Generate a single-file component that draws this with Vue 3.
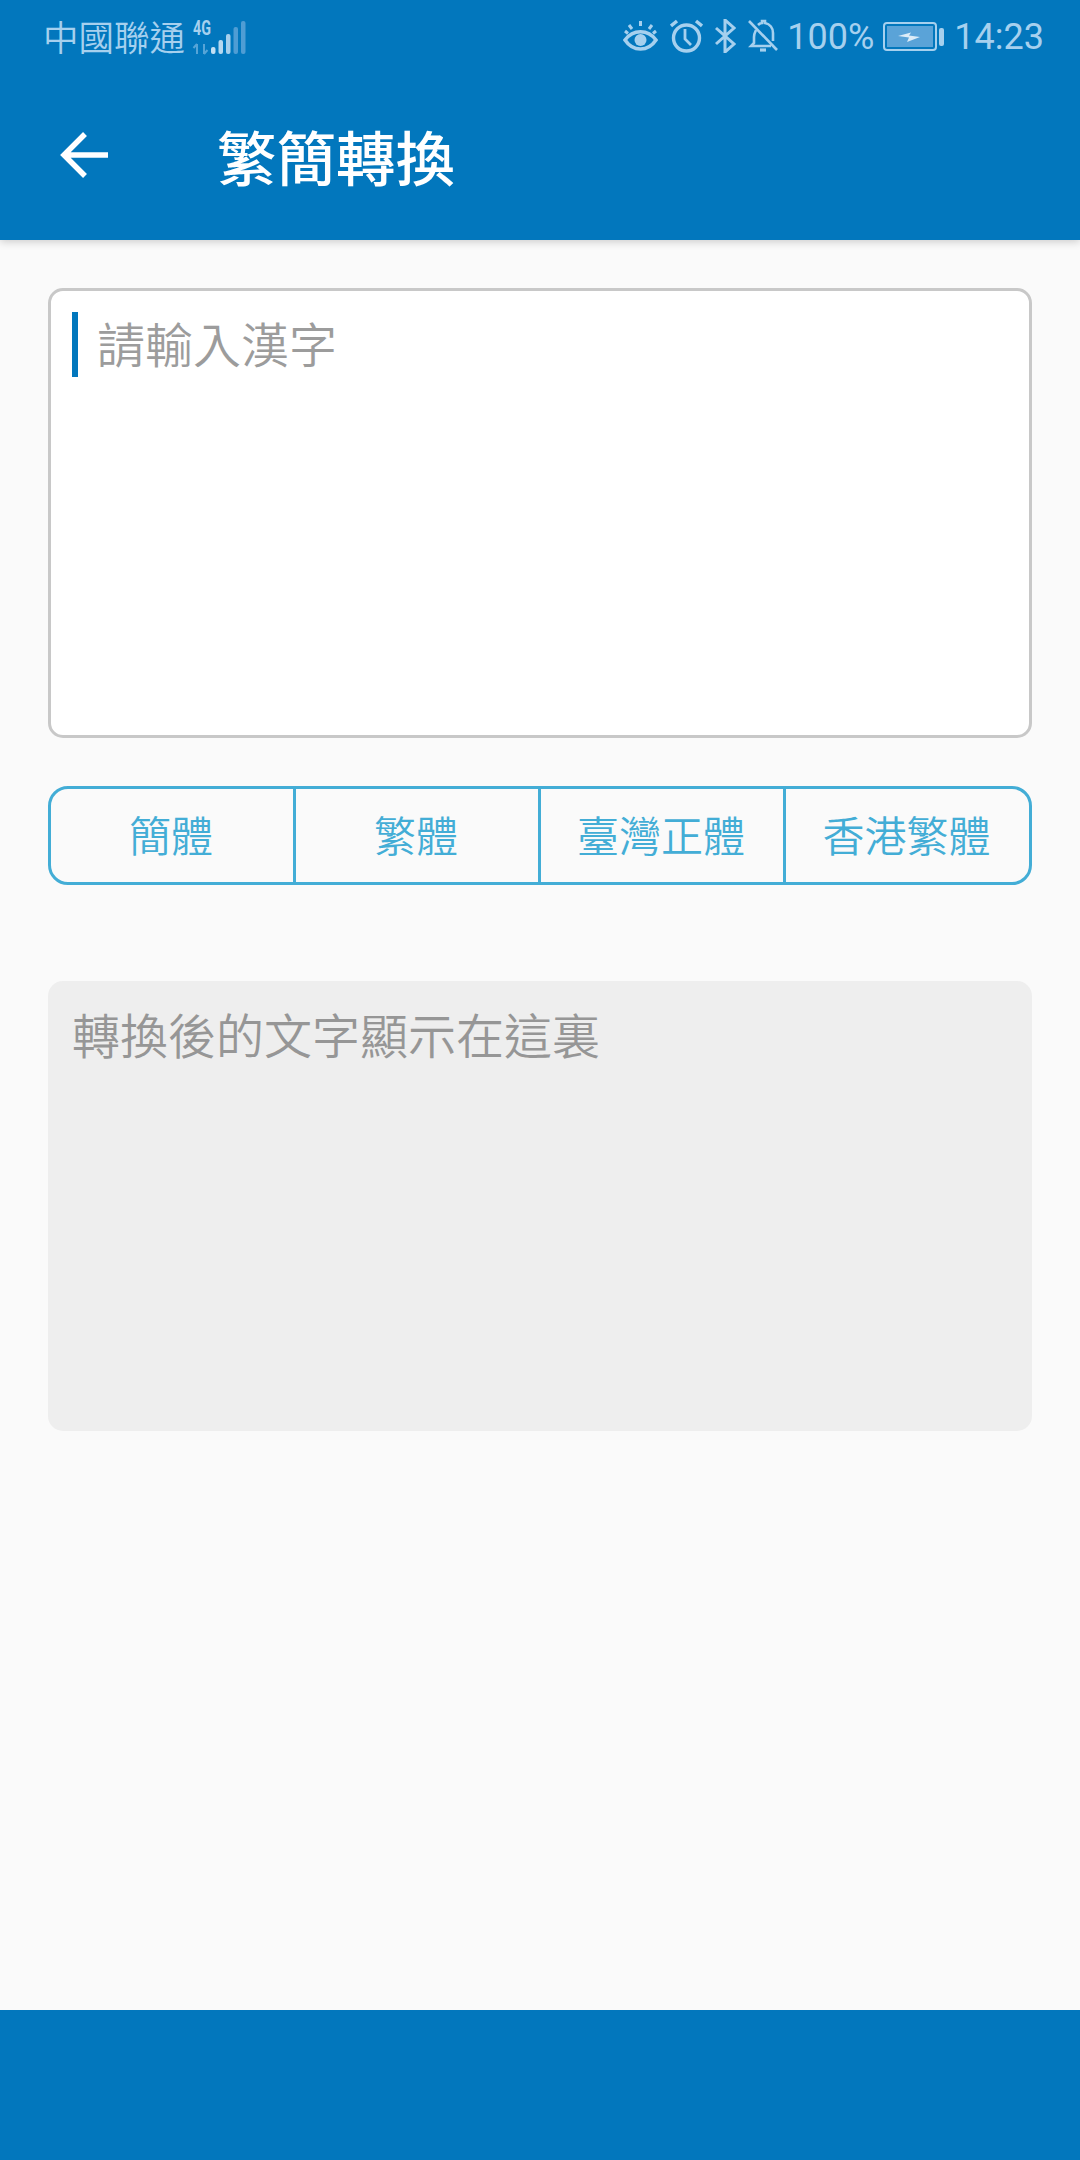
<script setup>
// opciones de conversion
const opciones = ['簡體', '繁體', '臺灣正體', '香港繁體']
</script>

<template>
  <div class="pantalla">
    <div class="barra-estado">
      <div class="estado-izq">
        <span class="operador">中國聯通</span>
        <svg class="senal" width="56" height="40" viewBox="0 -4 56 40">
          <text x="2" y="15" class="red" textLength="18" lengthAdjust="spacingAndGlyphs">4G</text>
          <path d="M6 24v10M2.500 28l3.500-4M13 24v10M16.500 30l-3.500 4" stroke="#8fc3e8" stroke-width="2" fill="none" opacity=".6" />
          <rect x="20" y="27" width="4.500" height="7" rx="2" fill="#c3e0f4" />
          <rect x="27.500" y="20" width="4.500" height="14" rx="2" fill="#b5d8f0" />
          <rect x="35" y="14" width="4.500" height="20" rx="2" fill="#a6cfec" />
          <rect x="42.500" y="7" width="4.500" height="27" rx="2" fill="#4f9dd4" />
          <rect x="50" y="1" width="4.500" height="33" rx="2" fill="#4f9dd4" />
        </svg>
      </div>
      <div class="estado-der">
        <svg width="35" height="34" viewBox="0 0 35 34" fill="none" stroke="#a6d0ee" stroke-width="3.600">
          <path d="M2 21c8-11 23-11 31 0c-8 12-23 12-31 0z" />
          <circle cx="17.500" cy="21" r="6" fill="#a6d0ee" stroke="none" />
          <path d="M17.500 2v5M6 6l3 4M29 6l-3 4M2 12l3 2.500M33 12l-3 2.500" stroke-width="3" />
        </svg>
        <svg width="33" height="34" viewBox="0 0 33 34" fill="none" stroke="#a6d0ee" stroke-width="3.400">
          <circle cx="16.500" cy="19" r="13" />
          <path d="M15 10v10l6 6" stroke-width="2.800" />
          <path d="M1 7l6-5M32 7l-6-5" />
        </svg>
        <svg width="21" height="34" viewBox="0 0 21 34" fill="none" stroke="#a6d0ee" stroke-width="3">
          <path d="M1 9l18 16l-9 8V1l9 8L1 25" />
        </svg>
        <svg class="campana" width="30" height="34" viewBox="0 0 30 34" fill="none" stroke="#a6d0ee" stroke-width="2.600">
          <path d="M8 11c-1 2-2 4-2 7v6l-3 3h20M10 6c1-1 3-2 4-2v-2h3v2c5 1 8 5 8 10v8" />
          <path d="M12 31h6" stroke-width="3.200" />
          <path d="M1 2l28 29" />
        </svg>
        <span class="pila-num">100%</span>
        <svg class="pila" width="61" height="30" viewBox="0 0 61 30">
          <rect x="1" y="2" width="52" height="27" rx="3" fill="none" stroke="#a6d0ee" stroke-width="2" />
          <rect x="4" y="5" width="46" height="21" fill="#5aa3d8" />
          <path d="M15 15l13-3.500l-2 3l11 1.500l-13 5l2-4.500z" fill="#dcecf8" />
          <rect x="56" y="7" width="5" height="18" rx="2" fill="#a6d0ee" />
        </svg>
        <span class="hora">14:23</span>
      </div>
    </div>

    <header class="cabecera">
      <svg class="volver" width="50" height="48" viewBox="0 0 50 48" fill="none" stroke="#fff" stroke-width="5.500">
        <path d="M48 24H4M25 3L4 24l21 21" />
      </svg>
      <h1>繁簡轉換</h1>
    </header>

    <main class="contenido">
      <div class="entrada">
        <span class="cursor"></span>
        <span class="placeholder">請輸入漢字</span>
      </div>

      <div class="botones">
        <button v-for="op in opciones" :key="op" type="button">{{ op }}</button>
      </div>

      <div class="salida">轉換後的文字顯示在這裏</div>
    </main>

    <footer class="pie"></footer>
  </div>
</template>

<style>
html, body {
  margin: 0;
  background: #fafafa;
}
</style>

<style scoped>
.pantalla {
  width: 1080px;
  height: 2160px;
  display: flex;
  flex-direction: column;
  background: #fafafa;
  font-family: "Noto Sans CJK TC", "Noto Sans", sans-serif;
}

.barra-estado {
  height: 72px;
  flex: none;
  box-sizing: border-box;
  padding: 0 36px 0 43px;
  display: flex;
  align-items: center;
  justify-content: space-between;
  background: #0277bd;
  color: #a6d0ee;
  position: relative;
  z-index: 1;
}
.estado-izq, .estado-der {
  display: flex;
  align-items: center;
}
.estado-izq {
  gap: 6px;
}
.estado-der {
  gap: 12px;
}
.operador {
  font-size: 35.500px;
  line-height: 40px;
  font-weight: 350;
}
.red {
  font: bold 20px Roboto, sans-serif;
  fill: #a6d0ee;
}
.pila-num, .hora {
  font-family: Roboto, sans-serif;
  font-size: 36px;
  line-height: 40px;
  margin-top: 2px;
}
.pila-num {
  margin-left: -3px;
}
.pila {
  margin-left: -3px;
}
.hora {
  margin-left: -2px;
}

.cabecera {
  height: 168px;
  flex: none;
  box-sizing: border-box;
  padding: 0 0 2px 60px;
  display: flex;
  align-items: center;
  gap: 107px;
  background: #0277bd;
  box-shadow: 0 2px 8px rgba(0, 0, 0, 0.18);
}
.cabecera h1 {
  margin: 0;
  color: #fff;
  font-size: 59.500px;
  line-height: 72px;
  font-weight: 500;
}

.contenido {
  flex: 1;
  box-sizing: border-box;
  padding: 48px 48px 0;
  display: flex;
  flex-direction: column;
}

.entrada {
  height: 450px;
  box-sizing: border-box;
  padding: 21px 21px;
  display: flex;
  align-items: flex-start;
  gap: 19px;
  background: #fff;
  border: 3px solid #c8c8c8;
  border-radius: 15px;
}
.cursor {
  width: 6px;
  height: 65px;
  background: #0277bd;
}
.placeholder {
  color: #9c9c9c;
  font-size: 48px;
  line-height: 60px;
  font-weight: 350;
}

.botones {
  margin-top: 48px;
  height: 99px;
  box-sizing: border-box;
  display: grid;
  grid-template-columns: 245px 245px 245px 1fr;
  border: 3px solid #43add6;
  border-radius: 20px;
}
.botones button {
  padding: 0 2px 5px 0;
  border: none;
  border-right: 3px solid #43add6;
  background: transparent;
  color: #43add6;
  font-family: inherit;
  font-size: 42px;
  font-weight: 350;
}
.botones button:last-child {
  border-right: none;
}

.salida {
  margin-top: 96px;
  height: 450px;
  box-sizing: border-box;
  padding: 24px;
  background: #eeeeee;
  border-radius: 15px;
  color: #969696;
  font-size: 48px;
  line-height: 56px;
  font-weight: 350;
}

.pie {
  height: 150px;
  flex: none;
  background: #0277bd;
}
</style>
